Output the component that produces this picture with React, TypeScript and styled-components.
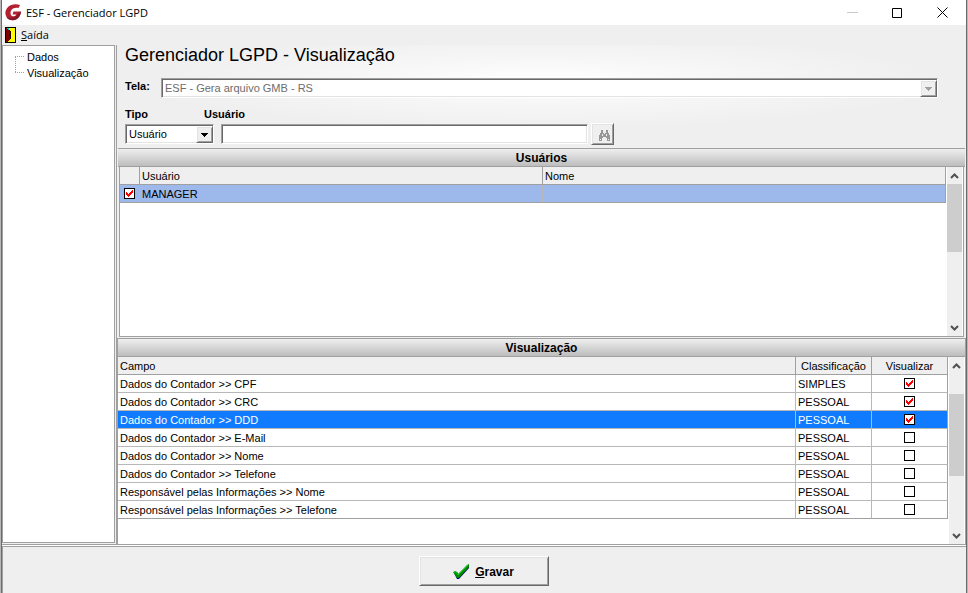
import React from "react";
import styled, { createGlobalStyle, css } from "styled-components";

const GlobalStyle = createGlobalStyle`
  *, *::before, *::after { box-sizing: border-box; }
  body {
    margin: 0;
    background: #b8b8b8;
    color: #000;
    font-family: "Liberation Sans", Arial, sans-serif;
    font-size: 11px;
    line-height: 17px;
  }
  button, input, select { font: inherit; color: inherit; }
`;

const raised = css`
  background: #efefef;
  border: 1px solid;
  border-color: #fff #696969 #696969 #fff;
  box-shadow: inset 1px 1px #e3e3e3, inset -1px -1px #a0a0a0;
`;

const sunken = css`
  border: 1px solid;
  border-color: #a0a0a0 #fff #fff #a0a0a0;
  box-shadow: inset 1px 1px #696969, inset -1px -1px #e3e3e3;
`;

const Window = styled.div`
  display: flex;
  flex-direction: column;
  min-height: 100vh;
  margin: 0 1px;
  border: solid #6c6c6c;
  border-width: 0 1px;
  background: #efefef;
`;

const TitleBar = styled.header`
  display: flex;
  align-items: center;
  height: 25px;
  padding-left: 3px;
  gap: 4px;
  background: #fff;
`;

const WindowTitle = styled.h1`
  flex: 1;
  margin: 0;
  font: 11px/24px "Open Sans", sans-serif;
`;

const CaptionButtons = styled.div`
  display: flex;
  padding-right: 1px;
`;

const CaptionButton = styled.button`
  display: grid;
  place-items: center;
  width: 45px;
  height: 24px;
  padding: 0;
  border: 0;
  background: none;
`;

const MenuBar = styled.nav`
  display: flex;
  align-items: center;
  height: 20px;
  padding-left: 3px;
`;

const MenuItem = styled.button`
  display: flex;
  align-items: center;
  gap: 5px;
  padding: 0;
  border: 0;
  background: none;
  font: 11px/18px "Open Sans", sans-serif;
`;

const Body = styled.div`
  display: flex;
  flex: 1;
  border-bottom: 1px solid #a0a0a0;
`;

const TreePanel = styled.aside`
  flex: none;
  width: 113px;
  margin: 0 1px 1px 0;
  padding: 3px 0 0 12px;
  border: 1px solid #a0a0a0;
  background: #fff;
`;

const Tree = styled.ul`
  margin: 0;
  padding: 0;
  list-style: none;
`;

const TreeItem = styled.li<{ $last?: boolean }>`
  display: flex;
  height: 16px;
  line-height: 16px;

  &::before {
    content: "";
    width: 9px;
    height: ${(p) => (p.$last ? 8 : 16)}px;
    margin-right: 3px;
    background:
      repeating-linear-gradient(90deg, #a0a0a0 0 1px, transparent 1px 2px) 0 7px / 9px 1px no-repeat,
      repeating-linear-gradient(#a0a0a0 0 1px, transparent 1px 2px) 0 ${(p) => (p.$last ? 0 : 8)}px / 1px 8px no-repeat;
  }
`;

const Main = styled.main`
  display: flex;
  flex: 1;
  flex-direction: column;
  min-width: 0;
  border-left: 1px solid #a0a0a0;
`;

const Form = styled.form`
  display: flex;
  flex-direction: column;
  height: 103px;
  padding: 0 28px 0 8px;
  background: radial-gradient(ellipse 400px 48px at 50% 36px, #fff, #f6f6f6 50%, #efefef);
`;

const Heading = styled.h2`
  margin: 0 0 13px;
  font-size: 18px;
  font-weight: 400;
  line-height: 20px;
`;

const Field = styled.div`
  display: flex;
  height: 20px;
`;

const Label = styled.label<{ $width: number }>`
  flex: none;
  width: ${(p) => p.$width}px;
  font-weight: 700;
`;

const Labels = styled.div`
  display: flex;
  margin-top: 8px;
`;

const Controls = styled.div`
  display: flex;
  align-items: center;
`;

const SelectBox = styled.div<{ $width?: number }>`
  position: relative;
  flex: ${(p) => (p.$width ? `0 0 ${p.$width}px` : 1)};
  height: 20px;
`;

const Select = styled.select`
  ${sunken}
  display: block;
  width: 100%;
  height: 20px;
  padding: 1px 20px 0 3px;
  border-radius: 0;
  appearance: none;
  background: #fff;
  opacity: 1;

  &:disabled { color: #6d6d6d; }
`;

const DropMark = styled.span`
  ${raised}
  position: absolute;
  top: 2px;
  right: 1px;
  display: grid;
  place-items: center;
  width: 17px;
  height: 17px;
  pointer-events: none;
`;

const TextInput = styled.input`
  ${sunken}
  flex: 0 1 367px;
  min-width: 0;
  height: 20px;
  margin: 0 3px 0 7px;
  padding: 0 4px;
  background: #fff;
`;

const SearchButton = styled.button`
  ${raised}
  display: grid;
  place-items: center;
  width: 23px;
  height: 22px;
  padding: 3px 0 0 3px;
`;

const SectionTitle = styled.h3`
  height: 19px;
  margin: 0;
  border: solid #a0a0a0;
  border-width: 1px 0;
  background: linear-gradient(#efefef, #bdbdbd);
  font-size: 12px;
  line-height: 18px;
  text-align: center;
`;

const GridBox = styled.section<{ $inset?: boolean }>`
  display: flex;
  background: #fff;
  ${(p) =>
    p.$inset
      ? css`
          height: 170px;
          margin: 0 1px 1px 1px;
          border: solid #a0a0a0;
          border-width: 0 1px 1px;
        `
      : css`
          flex: 1;
        `}
`;

const Upper = styled.div`
  margin: 0 1px;
`;

const Lower = styled.div`
  display: flex;
  flex: 1;
  flex-direction: column;
  border: solid #a0a0a0;
  border-width: 0 1px;
`;

const TableArea = styled.div`
  flex: 1;
  min-width: 0;
`;

const Table = styled.table`
  width: 100%;
  table-layout: fixed;
  border-collapse: separate;
  border-spacing: 0;
`;

const HeadCell = styled.th<{ $width?: string; $center?: boolean }>`
  width: ${(p) => p.$width ?? "auto"};
  height: 18px;
  padding: 1px 2px 0;
  border: solid #a0a0a0;
  border-width: 0 1px 1px 0;
  background: #efefef;
  font-weight: 400;
  line-height: 16px;
  text-align: ${(p) => (p.$center ? "center" : "left")};
`;

const Row = styled.tr<{ $tone?: "soft" | "strong" }>`
  background: ${(p) => (p.$tone === "soft" ? "#9db8eb" : p.$tone === "strong" ? "#107bff" : "#fff")};
  color: ${(p) => (p.$tone === "strong" ? "#fff" : "#000")};

  &:last-child td { border-bottom-color: #a0a0a0; }
`;

const Cell = styled.td`
  height: 18px;
  padding: 1px 2px 0;
  border: solid #b8b8b8;
  border-width: 0 1px 1px 0;
  line-height: 16px;
  white-space: nowrap;

  &:last-child { border-right-color: #a0a0a0; }
`;

const CheckCell = styled(Cell)`
  padding: 0 2px;
`;

const CheckWrap = styled.span`
  position: relative;
  display: block;
  width: 11px;
  height: 11px;
  margin: 0 auto;

  svg {
    position: absolute;
    top: 2px;
    left: 2px;
    pointer-events: none;
  }
`;

const CheckInput = styled.input`
  display: block;
  width: 11px;
  height: 11px;
  margin: 0;
  border: 1px solid #000;
  appearance: none;
  background: #fff;

  & + svg { visibility: hidden; }
  &:checked + svg { visibility: visible; }
`;

const ScrollTrack = styled.div`
  display: flex;
  flex: none;
  flex-direction: column;
  width: 17px;
  border: solid #fff;
  border-width: 0 1px;
  background: #efefef;
`;

const ScrollButton = styled.button`
  display: grid;
  flex: none;
  place-items: center;
  height: 17px;
  padding: 0;
  border: 0;
  background: none;
`;

const ScrollRail = styled.div<{ $offset: number }>`
  flex: 1;
  padding-top: ${(p) => p.$offset}px;
`;

const ScrollThumb = styled.div<{ $size: number }>`
  height: ${(p) => p.$size}px;
  background: #cdcdcd;
`;

const Footer = styled.footer`
  display: flex;
  justify-content: center;
  height: 47px;
  margin-top: 1px;
  padding: 9px 2px 0 0;
  border: solid #a0a0a0;
  border-width: 1px 0 0 1px;
  box-shadow: 0 -1px #fff;
`;

const SaveButton = styled.button`
  ${raised}
  display: flex;
  align-items: center;
  justify-content: center;
  gap: 5px;
  width: 130px;
  height: 30px;
  padding: 2px 0 0;
  font-size: 12px;
  font-weight: 700;
`;

const Triangle = ({ color }: { color: string }) => (
  <svg width="7" height="4" viewBox="0 0 7 4" shapeRendering="crispEdges" aria-hidden="true">
    <path d="M0 0h7v1H6v1H5v1H4v1H3V3H2V2H1V1H0z" fill={color} />
  </svg>
);

const Check = ({ label, checked }: { label: string; checked?: boolean }) => (
  <CheckWrap>
    <CheckInput type="checkbox" defaultChecked={checked} aria-label={label} />
    <svg width="7" height="7" viewBox="0 0 7 7" shapeRendering="crispEdges" aria-hidden="true">
      <path d="M0 2h1v1h1v1h1V3h1V2h1V1h1V0h1v3H6v1H5v1H4v1H3v1H2V6H1V5H0z" fill="#f00" />
    </svg>
  </CheckWrap>
);

const Chevron = ({ down }: { down?: boolean }) => (
  <svg width="9" height="6" viewBox="0 0 9 6" aria-hidden="true">
    <path d={down ? "M1 1l3.5 3.5L8 1" : "M1 5l3.5-3.5L8 5"} fill="none" stroke="#505050" strokeWidth="2" />
  </svg>
);

const Scroller = ({ name, offset, size }: { name: string; offset: number; size: number }) => (
  <ScrollTrack>
    <ScrollButton type="button" aria-label={`${name}: rolar para cima`}><Chevron /></ScrollButton>
    <ScrollRail $offset={offset}><ScrollThumb $size={size} /></ScrollRail>
    <ScrollButton type="button" aria-label={`${name}: rolar para baixo`}><Chevron down /></ScrollButton>
  </ScrollTrack>
);

const Logo = () => (
  <svg width="17" height="17" viewBox="0 0 17 17" aria-hidden="true">
    <path
      d="M15 1C11-.3 6 0 3 3C0 6-.3 10 1.500 13c2 3.500 7 4 10 2.300c2.500-1.300 4-4 4.500-7.800H8.500L7.500 10.500h4c-1 2-4.500 2.500-5.500 .5C5 9 5.500 6 8 4.500c2-1 4-1 5.500-.5z"
      fill="#b3202f"
    />
    <path d="M1.500 13c2 3.500 7 4 10 2.300c2.500-1.300 4-4 4.500-7.800l-3 2c-2 4-7 5.500-11.500 3.500z" fill="#86182a" />
  </svg>
);

const Door = () => (
  <svg width="11" height="16" viewBox="0 0 11 16" shapeRendering="crispEdges" aria-hidden="true">
    <path d="M0 0h11v16H0z" fill="#000" />
    <path d="M1 1h9v14H1z" fill="#ff0" />
    <path d="M1 1h1v1h1v1h1v1h1v9H4v1H3v1H1z" fill="#800000" />
    <path d="M2 1h2v1H2zM3 2h1v1H3z" fill="#0cc" />
    <path d="M5 4h1v8H5zM4 7h1v2H4zM4 3h1v1H4z" fill="#200" />
  </svg>
);

const Binoculars = () => (
  <svg width="11" height="11" viewBox="0 0 11 11" shapeRendering="crispEdges" aria-hidden="true">
    <path
      fillRule="evenodd"
      d="M2 0h2v3h1v1h1V3h1V0h2v3h1v2h1v6H8V8H7V7H4v1H3v3H0V5h1V3h1zM1 9v1h1V9zM9 9v1h1V9zM3 4v2h1V4zM7 4v2h1V4z"
      fill="#979797"
    />
  </svg>
);

const GreenTick = () => (
  <svg width="17" height="16" viewBox="0 0 17 16" aria-hidden="true">
    <path d="M1 9l3-1 2 3 8-9 2 0v2L6 15H4z" fill="#000080" />
    <path d="M0 8l3-1 2 3L14 1l2-1v3L6 14H4z" fill="#008c00" />
    <path d="M1 8l2 0 2 3L15 1" fill="none" stroke="#10c820" />
  </svg>
);

const fields: { name: string; kind: string; visible: boolean }[] = [
  { name: "Dados do Contador >> CPF", kind: "SIMPLES", visible: true },
  { name: "Dados do Contador >> CRC", kind: "PESSOAL", visible: true },
  { name: "Dados do Contador >> DDD", kind: "PESSOAL", visible: true },
  { name: "Dados do Contador >> E-Mail", kind: "PESSOAL", visible: false },
  { name: "Dados do Contador >> Nome", kind: "PESSOAL", visible: false },
  { name: "Dados do Contador >> Telefone", kind: "PESSOAL", visible: false },
  { name: "Responsável pelas Informações >> Nome", kind: "PESSOAL", visible: false },
  { name: "Responsável pelas Informações >> Telefone", kind: "PESSOAL", visible: false },
];

const selectedField = "Dados do Contador >> DDD";

export default function App() {
  return (
    <>
      <GlobalStyle />
      <Window>
        <TitleBar>
          <Logo />
          <WindowTitle>ESF - Gerenciador LGPD</WindowTitle>
          <CaptionButtons>
            <CaptionButton type="button" aria-label="Minimizar" disabled>
              <svg width="11" height="11" aria-hidden="true"><path d="M0 5.500h11" stroke="#c8c8c8" /></svg>
            </CaptionButton>
            <CaptionButton type="button" aria-label="Maximizar">
              <svg width="11" height="11" aria-hidden="true"><path d="M.5 1.500h9v9h-9z" fill="none" stroke="#000" /></svg>
            </CaptionButton>
            <CaptionButton type="button" aria-label="Fechar">
              <svg width="11" height="11" aria-hidden="true"><path d="M.5.5l10 10M10.500.5l-10 10" stroke="#000" /></svg>
            </CaptionButton>
          </CaptionButtons>
        </TitleBar>
        <MenuBar>
          <MenuItem type="button"><Door /><span><u>S</u>aída</span></MenuItem>
        </MenuBar>
        <Body>
          <TreePanel>
            <Tree>
              <TreeItem>Dados</TreeItem>
              <TreeItem $last>Visualização</TreeItem>
            </Tree>
          </TreePanel>
          <Main>
            <Form onSubmit={(e) => e.preventDefault()}>
              <Heading>Gerenciador LGPD - Visualização</Heading>
              <Field>
                <Label htmlFor="tela" $width={36}>Tela:</Label>
                <SelectBox>
                  <Select id="tela" disabled>
                    <option>ESF - Gera arquivo GMB - RS</option>
                  </Select>
                  <DropMark><Triangle color="#a0a0a0" /></DropMark>
                </SelectBox>
              </Field>
              <Labels>
                <Label htmlFor="tipo" $width={79}>Tipo</Label>
                <Label htmlFor="usuario" $width={60}>Usuário</Label>
              </Labels>
              <Controls>
                <SelectBox $width={89}>
                  <Select id="tipo">
                    <option>Usuário</option>
                  </Select>
                  <DropMark><Triangle color="#000" /></DropMark>
                </SelectBox>
                <TextInput id="usuario" type="text" />
                <SearchButton type="button" aria-label="Pesquisar" disabled><Binoculars /></SearchButton>
              </Controls>
            </Form>
            <Upper>
              <SectionTitle>Usuários</SectionTitle>
              <GridBox $inset>
                <TableArea>
                  <Table>
                    <thead>
                      <tr>
                        <HeadCell $width="20px" aria-label="Selecionado" />
                        <HeadCell>Usuário</HeadCell>
                        <HeadCell>Nome</HeadCell>
                      </tr>
                    </thead>
                    <tbody>
                      <Row $tone="soft">
                        <CheckCell><Check label="MANAGER" checked /></CheckCell>
                        <Cell>MANAGER</Cell>
                        <Cell />
                      </Row>
                    </tbody>
                  </Table>
                </TableArea>
                <Scroller name="Usuários" offset={0} size={68} />
              </GridBox>
            </Upper>
            <Lower>
              <SectionTitle>Visualização</SectionTitle>
              <GridBox>
                <TableArea>
                  <Table>
                    <thead>
                      <tr>
                        <HeadCell>Campo</HeadCell>
                        <HeadCell $width="76px" $center>Classificação</HeadCell>
                        <HeadCell $width="76px" $center>Visualizar</HeadCell>
                      </tr>
                    </thead>
                    <tbody>
                      {fields.map((f) => (
                        <Row key={f.name} $tone={f.name === selectedField ? "strong" : undefined}>
                          <Cell>{f.name}</Cell>
                          <Cell>{f.kind}</Cell>
                          <CheckCell><Check label={f.name} checked={f.visible} /></CheckCell>
                        </Row>
                      ))}
                    </tbody>
                  </Table>
                </TableArea>
                <Scroller name="Visualização" offset={20} size={82} />
              </GridBox>
            </Lower>
          </Main>
        </Body>
        <Footer>
          <SaveButton type="button"><GreenTick /><span><u>G</u>ravar</span></SaveButton>
        </Footer>
      </Window>
    </>
  );
}
